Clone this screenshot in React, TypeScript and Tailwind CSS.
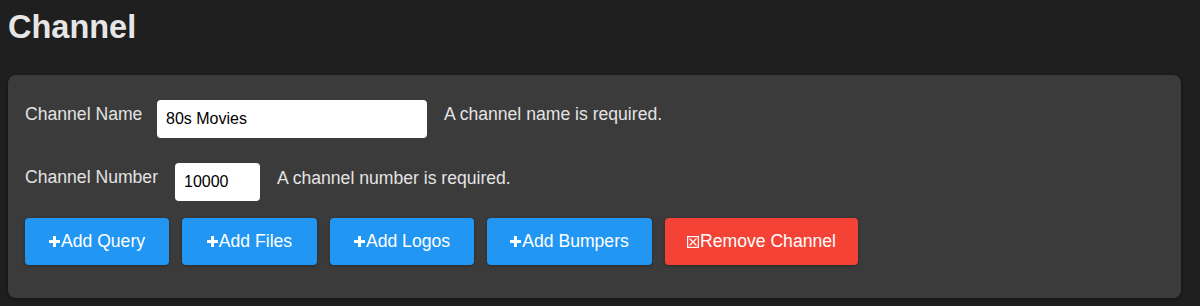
import React from 'react'

const font = { fontFamily: '"Liberation Sans", Arial, sans-serif' }

function PlusIcon() {
  return (
    <svg width="11" height="11" viewBox="0 0 11 11" className="mr-[1px] shrink-0">
      <path d="M4 0h3v4h4v3H7v4H4V7H0V4h4z" fill="currentColor" />
    </svg>
  )
}

function BallotIcon() {
  return (
    <svg width="12" height="12" viewBox="0 0 12 12" className="mr-[1px] shrink-0" fill="none" stroke="currentColor" strokeWidth="1.2">
      <rect x="0.6" y="0.6" width="10.8" height="10.8" />
      <path d="M2.5 2.5l7 7M9.5 2.5l-7 7" />
    </svg>
  )
}

const actions = [
  { label: 'Add Query', width: 'w-[144px]' },
  { label: 'Add Files', width: 'w-[135px]' },
  { label: 'Add Logos', width: 'w-[144px]' },
  { label: 'Add Bumpers', width: 'w-[165px]' },
]

export default function App() {
  return (
    <div className="min-h-[306px] w-[1200px] bg-[#1f1f1f] pl-2 pr-[19px] pt-[9px] pb-2" style={font}>
      <h1 className="h-[37px] text-[32.5px] font-bold leading-[37px] text-[#e6e6e6]">Channel</h1>

      <div className="mt-[29px] rounded-lg bg-[#3b3b3b] px-[17px] pt-[25px] pb-[33px] text-[17.6px] text-[#e3e3e3] shadow-[0_1px_4px_rgba(0,0,0,0.4)]">
        <div className="flex items-start gap-[17px]">
          <label className="w-[115px] whitespace-nowrap pt-[4px] leading-[20px]">Channel Name</label>
          <input
            defaultValue="80s Movies"
            className="h-[38px] w-[270px] rounded bg-white px-[9px] text-[16px] text-black outline-none"
          />
          <span className="pt-[4px] leading-[20px]">A channel name is required.</span>
        </div>

        <div className="mt-[25px] flex items-start gap-[17px]">
          <label className="pt-[4px] leading-[20px]">Channel Number</label>
          <input
            defaultValue="10000"
            className="h-[38px] w-[85px] rounded bg-white px-[9px] text-[16px] text-black outline-none"
          />
          <span className="pt-[5px] leading-[20px]">A channel number is required.</span>
        </div>

        <div className="mt-[17px] flex gap-[13px]">
          {actions.map((a) => (
            <button
              key={a.label}
              className={`flex h-[47px] items-center justify-center rounded bg-[#2196f3] text-[17.6px] text-white shadow-[0_1px_3px_rgba(0,0,0,0.3)] ${a.width}`}
            >
              <PlusIcon />
              {a.label}
            </button>
          ))}
          <button className="flex h-[47px] w-[193px] items-center justify-center rounded bg-[#f44336] text-[17.6px] text-white shadow-[0_1px_3px_rgba(0,0,0,0.3)]">
            <BallotIcon />
            Remove Channel
          </button>
        </div>
      </div>
    </div>
  )
}
